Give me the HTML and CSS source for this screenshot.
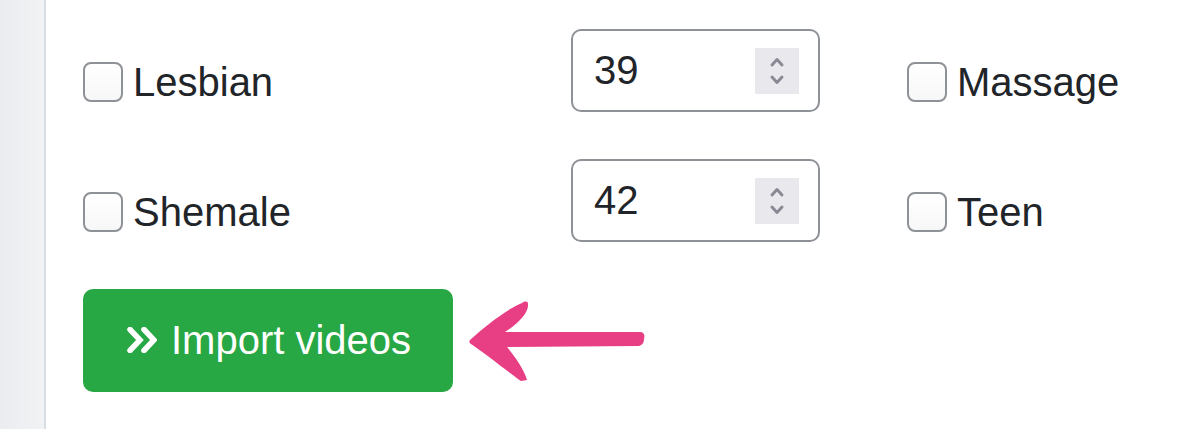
FILE: index.html
```html
<!DOCTYPE html>
<html>
<head>
    <link rel="stylesheet" href="styles.css">
</head>
<body>
    <div class="layout">
        <aside class="sidebar"></aside>

        <main class="content">
            <form class="filters">
                <label class="check">
                    <input type="checkbox" name="lesbian">
                    <span>Lesbian</span>
                </label>
                <div class="number">
                    <input type="number" name="lesbian_count" value="39">
                    <span class="spin">
                        <svg width="16" height="34" viewBox="0 0 16 34">
                            <polyline points="3,11 8,5.5 13,11" />
                            <polyline points="3,23 8,28.5 13,23" />
                        </svg>
                    </span>
                </div>
                <label class="check">
                    <input type="checkbox" name="massage">
                    <span>Massage</span>
                </label>

                <label class="check">
                    <input type="checkbox" name="shemale">
                    <span>Shemale</span>
                </label>
                <div class="number">
                    <input type="number" name="shemale_count" value="42">
                    <span class="spin">
                        <svg width="16" height="34" viewBox="0 0 16 34">
                            <polyline points="3,11 8,5.5 13,11" />
                            <polyline points="3,23 8,28.5 13,23" />
                        </svg>
                    </span>
                </div>
                <label class="check">
                    <input type="checkbox" name="teen">
                    <span>Teen</span>
                </label>
            </form>

            <div class="actions">
                <button type="button" class="btn-import">
                    <svg class="icon" width="30" height="26" viewBox="0 0 30 26">
                        <polyline points="3,2.5 13,13 3,23.5" />
                        <polyline points="17,2.5 27,13 17,23.5" />
                    </svg>
                    Import videos
                </button>

                <!-- hand drawn pointer -->
                <svg class="arrow" width="176" height="84" viewBox="0 0 176 84">
                    <path d="M1,41 C14,29 36,11 53,4 C56,2 59,2 59,5 C60,13 50,24 36,33
                             L171,33 C175,33 176,36 175,40 C175,44 173,46 170,47
                             L38,48 C46,58 55,70 58,81 L52,82 C38,72 18,56 2,45 C0,44 0,42 1,41 Z" />
                </svg>
            </div>
        </main>
    </div>
</body>
</html>
```

FILE: styles.css
```css
* {
    box-sizing: border-box;
}

body {
    margin: 0;
    font-family: "Liberation Sans", Arial, sans-serif;
    font-size: 40px;
    color: #212529;
    background: #fff;
}

.layout {
    display: flex;
    min-height: 429px;
}

.sidebar {
    width: 46px;
    flex-shrink: 0;
    background: linear-gradient(to right, #eaecef, #f1f2f4);
    border-right: 2px solid #d8dde4;
}

.content {
    flex: 1;
    padding: 29px 0 0 37px;
}

.filters {
    display: grid;
    grid-template-columns: 488px 336px 1fr;
    grid-auto-rows: 83px;
    row-gap: 47px;
}

.check {
    display: flex;
    align-items: center;
    align-self: end;
    gap: 10px;
    height: 60px;
    line-height: 60px;
}

.check input {
    appearance: none;
    -webkit-appearance: none;
    width: 40px;
    height: 40px;
    margin: 0;
    border: 2px solid #8e9196;
    border-radius: 8px;
    background: linear-gradient(#fff, #f7f7f8);
}

.number {
    display: flex;
    align-items: center;
    width: 249px;
    height: 83px;
    border: 2px solid #8e9196;
    border-radius: 10px;
    padding: 0 19px 0 21px;
}

.number input {
    flex: 1;
    min-width: 0;
    border: none;
    outline: none;
    padding: 0;
    font: inherit;
    color: #212529;
    background: transparent;
    -moz-appearance: textfield;
}

.number input::-webkit-inner-spin-button,
.number input::-webkit-outer-spin-button {
    -webkit-appearance: none;
    margin: 0;
}

.spin {
    display: flex;
    align-items: center;
    justify-content: center;
    width: 44px;
    height: 46px;
    background: #e9e9ed;
}

.spin polyline {
    fill: none;
    stroke: #8a8a94;
    stroke-width: 3;
    stroke-linecap: round;
    stroke-linejoin: round;
}

.actions {
    display: flex;
    align-items: center;
    gap: 16px;
    margin-top: 47px;
}

.btn-import {
    display: flex;
    align-items: center;
    gap: 14px;
    padding: 21px 42px 22px 44px;
    border: none;
    border-radius: 10px;
    background: #28a745;
    color: #fff;
    font: inherit;
    line-height: 60px;
    cursor: pointer;
}

.btn-import .icon polyline {
    fill: none;
    stroke: #fff;
    stroke-width: 5.5;
    stroke-linecap: round;
    stroke-linejoin: miter;
}

.arrow path {
    fill: #e83e84;
}
```
